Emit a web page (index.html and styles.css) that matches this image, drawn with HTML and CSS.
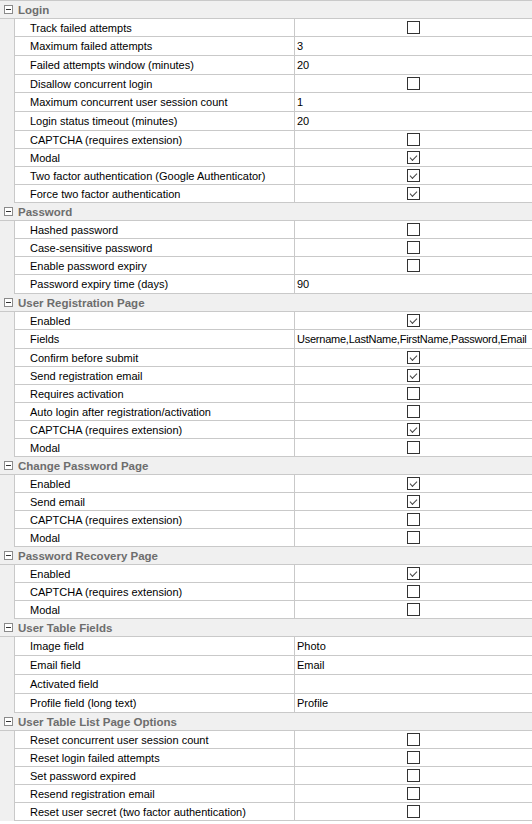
FILE: index.html
```html
<!DOCTYPE html>
<html>
<head>
<meta charset="utf-8">
<link rel="stylesheet" href="styles.css">
</head>
<body>
<div class="grid">
  <div class="cat"><span class="toggle"></span><span class="cat-label">Login</span></div>
  <div class="row"><span class="gut"></span><span class="name">Track failed attempts</span><span class="val"><span class="cb"></span></span></div>
  <div class="row txt"><span class="gut"></span><span class="name">Maximum failed attempts</span><span class="val">3</span></div>
  <div class="row txt"><span class="gut"></span><span class="name">Failed attempts window (minutes)</span><span class="val">20</span></div>
  <div class="row"><span class="gut"></span><span class="name">Disallow concurrent login</span><span class="val"><span class="cb"></span></span></div>
  <div class="row txt"><span class="gut"></span><span class="name">Maximum concurrent user session count</span><span class="val">1</span></div>
  <div class="row txt"><span class="gut"></span><span class="name">Login status timeout (minutes)</span><span class="val">20</span></div>
  <div class="row"><span class="gut"></span><span class="name">CAPTCHA (requires extension)</span><span class="val"><span class="cb"></span></span></div>
  <div class="row"><span class="gut"></span><span class="name">Modal</span><span class="val"><span class="cb on"></span></span></div>
  <div class="row"><span class="gut"></span><span class="name">Two factor authentication (Google Authenticator)</span><span class="val"><span class="cb on"></span></span></div>
  <div class="row"><span class="gut"></span><span class="name">Force two factor authentication</span><span class="val"><span class="cb on"></span></span></div>

  <div class="cat"><span class="toggle"></span><span class="cat-label">Password</span></div>
  <div class="row"><span class="gut"></span><span class="name">Hashed password</span><span class="val"><span class="cb"></span></span></div>
  <div class="row"><span class="gut"></span><span class="name">Case-sensitive password</span><span class="val"><span class="cb"></span></span></div>
  <div class="row"><span class="gut"></span><span class="name">Enable password expiry</span><span class="val"><span class="cb"></span></span></div>
  <div class="row txt"><span class="gut"></span><span class="name">Password expiry time (days)</span><span class="val">90</span></div>

  <div class="cat"><span class="toggle"></span><span class="cat-label">User Registration Page</span></div>
  <div class="row"><span class="gut"></span><span class="name">Enabled</span><span class="val"><span class="cb on"></span></span></div>
  <div class="row txt"><span class="gut"></span><span class="name">Fields</span><span class="val tight">Username,LastName,FirstName,Password,Email</span></div>
  <div class="row"><span class="gut"></span><span class="name">Confirm before submit</span><span class="val"><span class="cb on"></span></span></div>
  <div class="row"><span class="gut"></span><span class="name">Send registration email</span><span class="val"><span class="cb on"></span></span></div>
  <div class="row"><span class="gut"></span><span class="name">Requires activation</span><span class="val"><span class="cb"></span></span></div>
  <div class="row"><span class="gut"></span><span class="name">Auto login after registration/activation</span><span class="val"><span class="cb"></span></span></div>
  <div class="row"><span class="gut"></span><span class="name">CAPTCHA (requires extension)</span><span class="val"><span class="cb on"></span></span></div>
  <div class="row"><span class="gut"></span><span class="name">Modal</span><span class="val"><span class="cb"></span></span></div>

  <div class="cat"><span class="toggle"></span><span class="cat-label">Change Password Page</span></div>
  <div class="row"><span class="gut"></span><span class="name">Enabled</span><span class="val"><span class="cb on"></span></span></div>
  <div class="row"><span class="gut"></span><span class="name">Send email</span><span class="val"><span class="cb on"></span></span></div>
  <div class="row"><span class="gut"></span><span class="name">CAPTCHA (requires extension)</span><span class="val"><span class="cb"></span></span></div>
  <div class="row"><span class="gut"></span><span class="name">Modal</span><span class="val"><span class="cb"></span></span></div>

  <div class="cat"><span class="toggle"></span><span class="cat-label">Password Recovery Page</span></div>
  <div class="row"><span class="gut"></span><span class="name">Enabled</span><span class="val"><span class="cb on"></span></span></div>
  <div class="row"><span class="gut"></span><span class="name">CAPTCHA (requires extension)</span><span class="val"><span class="cb"></span></span></div>
  <div class="row"><span class="gut"></span><span class="name">Modal</span><span class="val"><span class="cb"></span></span></div>

  <div class="cat"><span class="toggle"></span><span class="cat-label">User Table Fields</span></div>
  <div class="row txt"><span class="gut"></span><span class="name">Image field</span><span class="val">Photo</span></div>
  <div class="row txt"><span class="gut"></span><span class="name">Email field</span><span class="val">Email</span></div>
  <div class="row txt"><span class="gut"></span><span class="name">Activated field</span><span class="val"></span></div>
  <div class="row txt"><span class="gut"></span><span class="name">Profile field (long text)</span><span class="val">Profile</span></div>

  <div class="cat"><span class="toggle"></span><span class="cat-label">User Table List Page Options</span></div>
  <div class="row"><span class="gut"></span><span class="name">Reset concurrent user session count</span><span class="val"><span class="cb"></span></span></div>
  <div class="row"><span class="gut"></span><span class="name">Reset login failed attempts</span><span class="val"><span class="cb"></span></span></div>
  <div class="row"><span class="gut"></span><span class="name">Set password expired</span><span class="val"><span class="cb"></span></span></div>
  <div class="row"><span class="gut"></span><span class="name">Resend registration email</span><span class="val"><span class="cb"></span></span></div>
  <div class="row"><span class="gut"></span><span class="name">Reset user secret (two factor authentication)</span><span class="val"><span class="cb"></span></span></div>
</div>
</body>
</html>
```

FILE: styles.css
```css
html, body {
  margin: 0;
  padding: 0;
  background: #ffffff;
}
body {
  font-family: "Liberation Sans", Arial, sans-serif;
  font-size: 11px;
  color: #000;
}
.grid {
  width: 532px;
  border-top: 1px solid #c9c9c9;
}
.cat {
  display: flex;
  align-items: center;
  height: 18px;
  box-sizing: border-box;
  background: #f0f0f0;
  border-bottom: 1px solid #c9c9c9;
}
.toggle {
  position: relative;
  width: 9px;
  height: 9px;
  box-sizing: border-box;
  border: 1px solid #8a8a8a;
  background: #fff;
  margin-left: 4px;
  margin-right: 5px;
}
.toggle::after {
  content: "";
  position: absolute;
  left: 1px;
  top: 3px;
  width: 5px;
  height: 1px;
  background: #333;
}
.cat-label {
  font-weight: bold;
  font-size: 11.5px;
  color: #6d6d6d;
  line-height: 17px;
  padding-top: 1px;
}
.row {
  display: flex;
  height: 18px;
}
.row.txt {
  height: 19px;
}
.gut {
  width: 15px;
  flex: none;
  box-sizing: border-box;
  background: #f0f0f0;
  border-right: 1px solid #c9c9c9;
}
.name {
  width: 280px;
  flex: none;
  display: flex;
  align-items: center;
  box-sizing: border-box;
  border-right: 1px solid #c9c9c9;
  border-bottom: 1px solid #c9c9c9;
  padding-left: 15px;
  white-space: nowrap;
  overflow: hidden;
}
.val {
  flex: 1;
  display: flex;
  align-items: center;
  box-sizing: border-box;
  border-bottom: 1px solid #c9c9c9;
  padding-left: 2px;
  white-space: nowrap;
  overflow: hidden;
}
.val.tight {
  letter-spacing: -0.24px;
}
.cb {
  position: relative;
  width: 13px;
  height: 13px;
  box-sizing: border-box;
  border: 1px solid #333;
  background: #fff;
  margin-left: 110px;
}
.cb.on::after {
  content: "";
  position: absolute;
  left: 3px;
  top: 1px;
  width: 6px;
  height: 3px;
  border-left: 1px solid #444;
  border-bottom: 1px solid #444;
  transform: translate(-1px, 2px) rotate(-45deg);
}
```
